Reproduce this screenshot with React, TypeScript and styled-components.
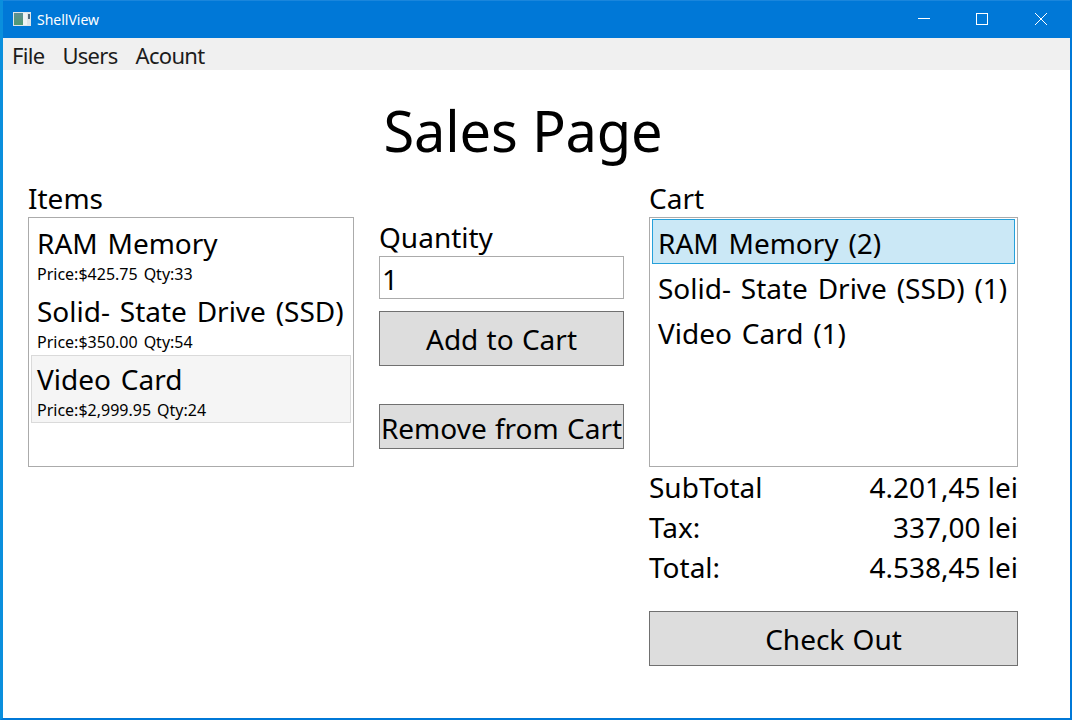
import React from "react";
import styled, { createGlobalStyle } from "styled-components";

const GlobalStyle = createGlobalStyle`
  html, body {
    margin: 0;
    padding: 0;
    background: #ffffff;
  }
  * {
    box-sizing: border-box;
  }
`;

const items = [
  { name: "RAM Memory", price: "$425.75", qty: 33 },
  { name: "Solid- State Drive (SSD)", price: "$350.00", qty: 54 },
  { name: "Video Card", price: "$2,999.95", qty: 24, hovered: true },
];

const cart = [
  { label: "RAM Memory (2)", selected: true },
  { label: "Solid- State Drive (SSD) (1)" },
  { label: "Video Card (1)" },
];

const totals = [
  { label: "SubTotal", value: "4.201,45 lei" },
  { label: "Tax:", value: "337,00 lei" },
  { label: "Total:", value: "4.538,45 lei" },
];

const App: React.FC = () => {
  return (
    <Window>
      <GlobalStyle />
      <TitleBar>
        <AppIcon viewBox="0 0 18 14">
          <defs>
            <linearGradient id="panel" x1="0" y1="0" x2="0" y2="1">
              <stop offset="0" stopColor="#5d8f95" />
              <stop offset="1" stopColor="#4f9a72" />
            </linearGradient>
          </defs>
          <rect x="0" y="0" width="18" height="14" fill="#dfe5e8" />
          <rect x="1" y="1" width="9" height="12" fill="url(#panel)" />
          <rect x="10" y="1" width="4" height="12" fill="#eef2f4" />
          <rect x="15" y="2" width="2" height="5" fill="#52697c" />
        </AppIcon>
        <WindowTitle>ShellView</WindowTitle>
        <WindowButton>
          <svg width="12" height="12" viewBox="0 0 12 12">
            <path d="M0 5.5h12" stroke="#fff" strokeWidth="1" fill="none" />
          </svg>
        </WindowButton>
        <WindowButton>
          <svg width="12" height="12" viewBox="0 0 12 12">
            <rect x="0.5" y="0.5" width="11" height="11" stroke="#fff" strokeWidth="1" fill="none" />
          </svg>
        </WindowButton>
        <WindowButton $close>
          <svg width="12" height="12" viewBox="0 0 12 12">
            <path d="M0 0l12 12M12 0L0 12" stroke="#fff" strokeWidth="1" fill="none" />
          </svg>
        </WindowButton>
      </TitleBar>
      <MenuBar>
        <MenuItem>File</MenuItem>
        <MenuItem>Users</MenuItem>
        <MenuItem>Acount</MenuItem>
      </MenuBar>
      <Content>
        <PageTitle>Sales Page</PageTitle>
        <Columns>
          <Column>
            <Label>Items</Label>
            <ListBox>
              {items.map((item) => (
                <ProductRow key={item.name} $hovered={item.hovered}>
                  <ProductName>{item.name}</ProductName>
                  <ProductMeta>
                    <span>Price:{item.price}</span>
                    <span>Qty:{item.qty}</span>
                  </ProductMeta>
                </ProductRow>
              ))}
            </ListBox>
          </Column>
          <MiddleColumn>
            <Label>Quantity</Label>
            <QuantityInput readOnly value="1" />
            <AddButton>Add to Cart</AddButton>
            <RemoveButton>Remove from Cart</RemoveButton>
          </MiddleColumn>
          <Column>
            <Label>Cart</Label>
            <ListBox>
              {cart.map((line) => (
                <CartRow key={line.label} $selected={line.selected}>
                  {line.label}
                </CartRow>
              ))}
            </ListBox>
            <Totals>
              {totals.map((row) => (
                <TotalRow key={row.label}>
                  <span>{row.label}</span>
                  <span>{row.value}</span>
                </TotalRow>
              ))}
            </Totals>
            <CheckOutButton>Check Out</CheckOutButton>
          </Column>
        </Columns>
      </Content>
    </Window>
  );
};

export default App;

const Window = styled.div`
  width: 1072px;
  height: 720px;
  overflow: hidden;
  display: flex;
  flex-direction: column;
  background: #ffffff;
  border: solid #0078d7;
  border-width: 0 2px 2px 3px;
  border-left-color: #0a8fdd;
  font-family: "Noto Sans", "Open Sans", sans-serif;
  color: #000000;
`;

const TitleBar = styled.div`
  height: 38px;
  flex: none;
  display: flex;
  align-items: center;
  margin-left: -3px;
  padding-left: 13px;
  background: #0078d7;
  box-shadow: inset 0 1px 0 #1a86dc;
  color: #ffffff;
`;

const AppIcon = styled.svg`
  width: 18px;
  height: 14px;
  margin-right: 6px;
`;

const WindowTitle = styled.div`
  flex: 1;
  font-size: 14px;
`;

const WindowButton = styled.div<{ $close?: boolean }>`
  width: ${(p) => (p.$close ? "59px" : "58px")};
  height: 38px;
  display: flex;
  align-items: center;
  justify-content: center;
`;

const MenuBar = styled.div`
  height: 32px;
  flex: none;
  display: flex;
  align-items: center;
  gap: 18px;
  padding: 2px 0 0 9px;
  background: #f0f0f0;
`;

const MenuItem = styled.div`
  font-size: 22px;
  letter-spacing: -0.7px;
  color: #1c1c1c;
`;

const Content = styled.div`
  flex: 1;
  display: flex;
  flex-direction: column;
  padding-left: 25px;
`;

const PageTitle = styled.h1`
  margin: 22px 0 0;
  width: 990px;
  height: 76px;
  font-size: 56px;
  font-weight: 400;
  line-height: 76px;
  letter-spacing: -0.2px;
  text-align: center;
`;

const Columns = styled.div`
  margin-top: 17px;
  display: grid;
  grid-template-columns: 326px 245px 369px;
  column-gap: 25px;
`;

const Column = styled.div`
  display: flex;
  flex-direction: column;
`;

const MiddleColumn = styled(Column)`
  padding-top: 39px;
`;

const Label = styled.div`
  height: 32px;
  font-size: 28px;
  line-height: 26px;
`;

const ListBox = styled.div`
  height: 250px;
  padding: 1px 2px 2px;
  border: 1px solid #ababab;
`;

const ProductRow = styled.div<{ $hovered?: boolean }>`
  height: 68px;
  padding: 0 5px;
  border: 1px solid ${(p) => (p.$hovered ? "#dadada" : "transparent")};
  background: ${(p) => (p.$hovered ? "#f5f5f5" : "transparent")};
`;

const ProductName = styled.div`
  height: 43px;
  font-size: 28px;
  line-height: 46px;
  word-spacing: 2.5px;
  white-space: nowrap;
`;

const ProductMeta = styled.div`
  display: flex;
  gap: 6px;
  font-size: 16px;
  line-height: 22px;
`;

const CartRow = styled.div<{ $selected?: boolean }>`
  height: 45px;
  padding: 0 5px;
  font-size: 28px;
  line-height: 46px;
  word-spacing: 2.5px;
  white-space: nowrap;
  border: 1px solid ${(p) => (p.$selected ? "#26a0da" : "transparent")};
  background: ${(p) => (p.$selected ? "#cbe8f6" : "transparent")};
`;

const QuantityInput = styled.input`
  width: 245px;
  height: 43px;
  padding: 3px 2px 0;
  border: 1px solid #ababab;
  outline: none;
  font-family: inherit;
  font-size: 28px;
  color: #000000;
`;

const ActionButton = styled.button`
  display: block;
  padding: 0;
  border: 1px solid #707070;
  background: #dddddd;
  font-family: inherit;
  font-size: 28px;
  word-spacing: 1px;
  color: #000000;
  white-space: nowrap;
`;

const AddButton = styled(ActionButton)`
  width: 245px;
  height: 55px;
  margin-top: 12px;
`;

const RemoveButton = styled(ActionButton)`
  width: 245px;
  height: 45px;
  margin-top: 38px;
  padding-top: 2px;
`;

const CheckOutButton = styled(ActionButton)`
  width: 369px;
  height: 55px;
  margin-top: 24px;
`;

const Totals = styled.div`
  display: flex;
  flex-direction: column;
`;

const TotalRow = styled.div`
  height: 40px;
  display: flex;
  justify-content: space-between;
  font-size: 28px;
  line-height: 40px;
`;
